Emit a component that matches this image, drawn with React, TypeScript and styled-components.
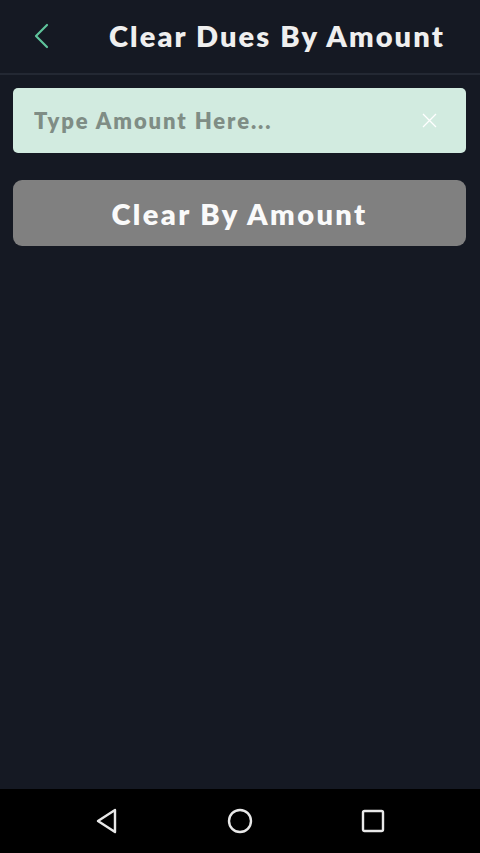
import React from "react";
import styled, { createGlobalStyle } from "styled-components";

const Global = createGlobalStyle`
  html, body { margin: 0; padding: 0; background: #151923; }
  * { box-sizing: border-box; }
`;

const Screen = styled.div`
  width: 480px;
  height: 853px;
  display: flex;
  flex-direction: column;
  background: #151923;
  font-family: "Lato", "Open Sans", sans-serif;
`;

const Header = styled.header`
  height: 75px;
  display: flex;
  align-items: center;
  border-bottom: 2px solid #232833;
  padding-bottom: 2px;
`;

const BackButton = styled.button`
  width: 84px;
  height: 100%;
  padding: 0 0 0 34px;
  display: flex;
  align-items: center;
  background: none;
  border: none;
`;

const Title = styled.h1`
  margin: 0 0 0 25px;
  color: #efefef;
  font-size: 29px;
  font-weight: 800;
  letter-spacing: 2.1px;
  white-space: nowrap;
`;

const Content = styled.main`
  flex: 1;
  display: flex;
  flex-direction: column;
  gap: 27px;
  padding: 13px 14px 0 13px;
`;

const InputBox = styled.div`
  height: 65px;
  border-radius: 5px;
  background: #d2ebe0;
  display: flex;
  align-items: center;
  padding: 0 29px 0 19px;
`;

const Input = styled.input`
  flex: 1;
  min-width: 0;
  border: none;
  background: transparent;
  outline: none;
  font-family: inherit;
  font-size: 22px;
  font-weight: 800;
  color: #33443b;
  letter-spacing: 1.9px;
  &::placeholder { color: #7f8d85; }
`;

const PrimaryButton = styled.button`
  height: 66px;
  border: none;
  border-radius: 9px;
  background: #808080;
  color: #fafafa;
  font-family: inherit;
  font-size: 29px;
  font-weight: 800;
  letter-spacing: 2.4px;
`;

const NavBar = styled.nav`
  height: 64px;
  background: #000;
  display: flex;
  align-items: center;
  justify-content: center;
`;

const NavSlot = styled.div`
  width: 133px;
  display: flex;
  justify-content: center;
`;

export default function App() {
  return (
    <>
      <Global />
      <Screen>
        <Header>
          <BackButton aria-label="back">
            <svg width="16" height="26" viewBox="0 0 16 26">
              <path d="M13 2 L2 13 L13 24" fill="none" stroke="#5fc39b" strokeWidth="2.2" strokeLinecap="round" strokeLinejoin="round" />
            </svg>
          </BackButton>
          <Title>Clear Dues By Amount</Title>
        </Header>
        <Content>
          <InputBox>
            <Input placeholder="Type Amount Here..." />
            <svg width="15" height="15" viewBox="0 0 15 15">
              <path d="M1 1 L14 14 M14 1 L1 14" stroke="#ffffff" strokeWidth="1.3" />
            </svg>
          </InputBox>
          <PrimaryButton>Clear By Amount</PrimaryButton>
        </Content>
        <NavBar>
          <NavSlot>
            <svg width="24" height="26" viewBox="0 0 24 26">
              <path d="M20 2 L3 13 L20 24 Z" fill="none" stroke="#e8e8e8" strokeWidth="2.4" strokeLinejoin="round" />
            </svg>
          </NavSlot>
          <NavSlot>
            <svg width="26" height="26" viewBox="0 0 26 26">
              <circle cx="13" cy="13" r="11" fill="none" stroke="#e8e8e8" strokeWidth="2.4" />
            </svg>
          </NavSlot>
          <NavSlot>
            <svg width="24" height="24" viewBox="0 0 24 24">
              <rect x="2" y="2" width="20" height="20" rx="1.5" fill="none" stroke="#e8e8e8" strokeWidth="2.4" />
            </svg>
          </NavSlot>
        </NavBar>
      </Screen>
    </>
  );
}
